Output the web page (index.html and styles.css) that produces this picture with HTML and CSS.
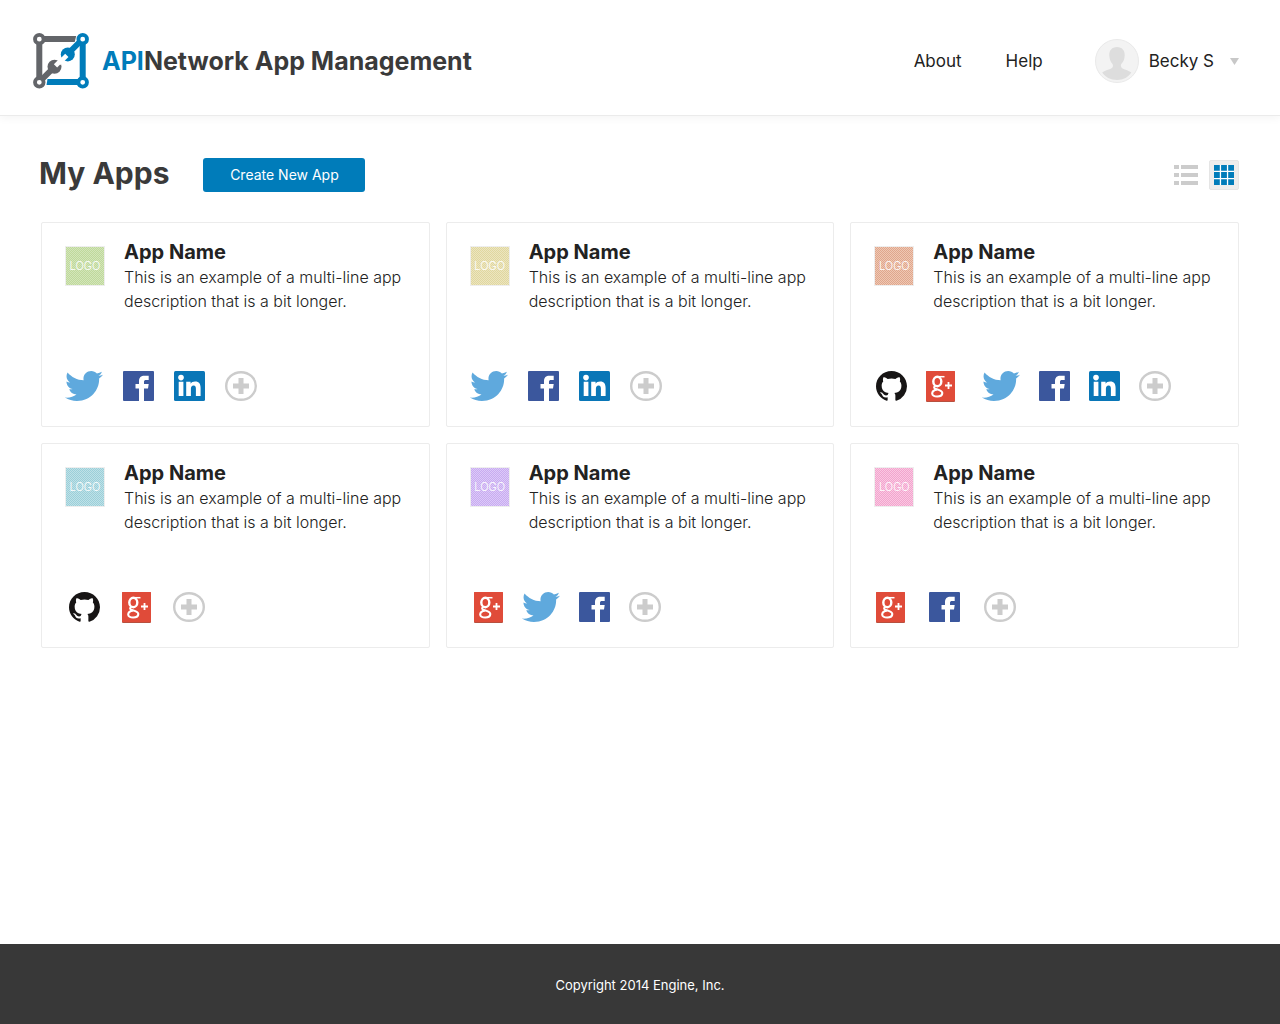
FILE: index.html
```html
<!DOCTYPE html>
<html lang="en">
<head>
<meta charset="utf-8">
<meta name="viewport" content="width=device-width, initial-scale=1">
<title>API Network App Management</title>
<link rel="stylesheet" href="styles.css">
</head>
<body>
<svg class="sprite" aria-hidden="true">
  <symbol id="twitter" viewBox="0 2.2 24 19.6" preserveAspectRatio="none"><path fill="#5fa9dd" d="M23.954 4.569c-.885.389-1.83.654-2.825.775 1.014-.611 1.794-1.574 2.163-2.723-.951.555-2.005.959-3.127 1.184-.896-.959-2.173-1.559-3.591-1.559-2.717 0-4.92 2.203-4.92 4.917 0 .39.045.765.127 1.124C7.691 8.094 4.066 6.13 1.64 3.161c-.427.722-.666 1.561-.666 2.475 0 1.71.87 3.213 2.188 4.096-.807-.026-1.566-.248-2.228-.616v.061c0 2.385 1.693 4.374 3.946 4.827-.413.111-.849.171-1.296.171-.314 0-.615-.03-.916-.086.631 1.953 2.445 3.377 4.604 3.417-1.68 1.319-3.809 2.105-6.102 2.105-.39 0-.779-.023-1.17-.067 2.189 1.394 4.768 2.209 7.557 2.209 9.054 0 13.999-7.496 13.999-13.986 0-.209 0-.42-.015-.63.961-.689 1.8-1.56 2.46-2.548l-.047-.02z"/></symbol>
  <symbol id="facebook" viewBox="0 0 31 30"><rect width="31" height="30" rx="1" fill="#3b579d"/><path fill="#fff" d="M16 30V17.500h-3.500V13H16v-2.800c0-3.700 2-5.500 5.500-5.500h4.200V9h-2.500c-1.600 0-2.200.6-2.200 2v2h4.700l-.7 4.500h-4V30z"/></symbol>
  <symbol id="linkedin" viewBox="0 0 31 30"><rect width="31" height="30" rx="1.500" fill="#0976b7"/><g fill="#fff"><circle cx="7" cy="6.600" r="2.800"/><path d="M4.700 10.800h4.700V25H4.700zM12.200 10.800h4.400v1.900c.8-1.400 2.400-2.300 4.500-2.300 4.200 0 5.500 2.600 5.500 6.600v8h-4.700v-7.200c0-2-.4-3.400-2.300-3.400s-2.700 1.400-2.700 3.400V25h-4.700z"/></g></symbol>
  <symbol id="github" viewBox="0 0 16 15.7" preserveAspectRatio="none"><path fill="#171515" d="M8 0C3.58 0 0 3.580 0 8c0 3.540 2.290 6.530 5.470 7.590.4.070.550-.170.550-.380 0-.190-.010-.820-.010-1.490-2.010.370-2.530-.490-2.690-.940-.090-.230-.480-.940-.820-1.130-.280-.150-.680-.520-.010-.530.630-.010 1.080.580 1.230.820.720 1.210 1.870.870 2.330.660.070-.520.280-.870.510-1.070-1.780-.200-3.640-.890-3.640-3.950 0-.870.310-1.590.820-2.150-.080-.200-.360-1.020.080-2.120 0 0 .670-.210 2.200.820.640-.180 1.320-.270 2-.270s1.360.090 2 .270c1.530-1.040 2.200-.820 2.200-.820.440 1.100.160 1.920.080 2.120.510.560.820 1.270.820 2.150 0 3.070-1.870 3.750-3.650 3.950.290.250.540.730.540 1.480 0 1.070-.010 1.930-.010 2.200 0 .210.150.460.550.380A8.013 8.013 0 0016 8c0-4.420-3.580-8-8-8z"/></symbol>
  <symbol id="googleplus" viewBox="0 0 29 31"><rect width="29" height="31" rx="1" fill="#b8503f"/><rect width="29" height="30" rx="1" fill="#e04b39"/><g fill="none" stroke="#fff"><ellipse cx="11.300" cy="10.500" rx="4" ry="4.700" stroke-width="2.400"/><path d="M12 5.700h6.500" stroke-width="1.500"/><path d="M9.500 14.700c-2 1.300-1.800 2.600.5 3.300 3.200 1 6.300 1.400 6.300 4 0 2.300-2.200 3.500-5.100 3.500-3 0-5-1.200-5-3.100 0-2 2-3.200 4.600-3.600" stroke-width="2.100"/><path d="M19 14.500h7M22.500 11v7" stroke-width="1.800"/></g></symbol>
  <symbol id="plus" viewBox="0 0 32 30"><ellipse cx="16" cy="15" rx="14.800" ry="13.800" fill="none" stroke="#ccc" stroke-width="2.400"/><path fill="#ccc" d="M13.500 7h5v5.500H24v5h-5.500V23h-5v-5.500H8v-5h5.500z"/></symbol>
</svg>

<header class="header">
  <a class="brand" href="#">
    <svg class="brand-mark" viewBox="0 0 56 56" aria-hidden="true">
      <g fill="none" stroke="#636569" stroke-width="6"><path d="M6.300 49V6H40"/><path d="M6.300 49l13-13"/></g>
      <path fill="#636569" d="M39 3h4.200l-1.500 6H39z"/>
      <circle cx="21.500" cy="33.800" r="7" fill="#636569"/>
      <path d="M22.500 32.800l8-8" stroke="#fff" stroke-width="4.600"/>
      <g fill="none" stroke="#007cba" stroke-width="6"><path d="M49.700 6v43H16"/><path d="M49.700 6l-13 13"/></g>
      <path fill="#007cba" d="M17 46h-2.500L13.500 52H17z"/>
      <circle cx="34.800" cy="21.400" r="7" fill="#007cba"/>
      <path d="M33.800 22.400l-8 8" stroke="#fff" stroke-width="4.600"/>
      <g fill="#fff" stroke-width="3.800"><g stroke="#636569"><circle cx="6.300" cy="6.200" r="4.300"/><circle cx="6.300" cy="49.300" r="4.300"/></g><g stroke="#007cba"><circle cx="49.700" cy="6.200" r="4.300"/><circle cx="49.700" cy="49.300" r="4.300"/></g></g>
    </svg>
    <span class="brand-name"><span class="brand-accent">API</span>Network App Management</span>
  </a>
  <nav class="nav">
    <a href="#">About</a>
    <a href="#">Help</a>
    <button class="user" type="button" aria-haspopup="true">
      <svg class="avatar" viewBox="0 0 44 44" aria-hidden="true"><circle cx="22" cy="22" r="21.500" fill="#f3f3f3" stroke="#e9e9e9"/><path fill="#ddd" d="M22 8c5 0 8 3.500 7.700 8.500-.2 3.500-1.300 6.200-3 8-.9 1-1 2.600-.4 3.700 1.300 2.400 7 2.600 10 5.300C33.500 38 28.500 41 22 41S10 38 7.200 33.500c3-2.700 8.900-2.900 10.400-5.300.6-1.100.4-2.700-.5-3.700-1.600-1.800-2.600-4.500-2.800-8C14 11.500 17 8 22 8z"/></svg>
      <span>Becky S</span>
      <svg class="caret" viewBox="0 0 9 7" aria-hidden="true"><path fill="#c8c8c8" d="M0 0h9L4.500 7z"/></svg>
    </button>
  </nav>
</header>

<main class="main">
  <div class="toolbar">
    <h1>My Apps</h1>
    <button class="create" type="button">Create New App</button>
    <div class="views">
      <button class="view" type="button" aria-label="List view"><svg viewBox="0 0 24 20"><path fill="#ccc" d="M0 0h5v4H0zM7 0h17v4H7zM0 8h5v4H0zM7 8h17v4H7zM0 16h5v4H0zM7 16h17v4H7z"/></svg></button>
      <button class="view view-active" type="button" aria-label="Grid view"><svg viewBox="0 0 24 20"><path fill="#fff" d="M2 0h20v20H2z"/><path fill="#007cba" d="M2 0h5.800v5.800H2zM9.100 0h5.800v5.800H9.100zM16.200 0H22v5.800h-5.800zM2 7.100h5.800v5.800H2zM9.100 7.100h5.800v5.800H9.100zM16.200 7.100H22v5.800h-5.800zM2 14.200h5.800V20H2zM9.100 14.200h5.800V20H9.100zM16.200 14.200H22V20h-5.800z"/></svg></button>
    </div>
  </div>

  <section class="grid" aria-label="Apps">
    <article class="card">
      <div class="summary"><div class="logo green">LOGO</div><div class="copy"><h2>App Name</h2><p>This is an example of a multi-line app description that is a bit longer.</p></div></div>
      <div class="links">
        <a href="#" aria-label="Twitter"><svg class="icon bird"><use href="#twitter"/></svg></a>
        <a href="#" aria-label="Facebook"><svg class="icon"><use href="#facebook"/></svg></a>
        <a href="#" aria-label="LinkedIn"><svg class="icon"><use href="#linkedin"/></svg></a>
        <button type="button" aria-label="Add network"><svg class="icon add"><use href="#plus"/></svg></button>
      </div>
    </article>
    <article class="card">
      <div class="summary"><div class="logo yellow">LOGO</div><div class="copy"><h2>App Name</h2><p>This is an example of a multi-line app description that is a bit longer.</p></div></div>
      <div class="links">
        <a href="#" aria-label="Twitter"><svg class="icon bird"><use href="#twitter"/></svg></a>
        <a href="#" aria-label="Facebook"><svg class="icon"><use href="#facebook"/></svg></a>
        <a href="#" aria-label="LinkedIn"><svg class="icon"><use href="#linkedin"/></svg></a>
        <button type="button" aria-label="Add network"><svg class="icon add"><use href="#plus"/></svg></button>
      </div>
    </article>
    <article class="card">
      <div class="summary"><div class="logo orange">LOGO</div><div class="copy"><h2>App Name</h2><p>This is an example of a multi-line app description that is a bit longer.</p></div></div>
      <div class="links indent compact">
        <a href="#" aria-label="GitHub"><svg class="icon"><use href="#github"/></svg></a>
        <a class="group-end" href="#" aria-label="Google Plus"><svg class="icon gplus"><use href="#googleplus"/></svg></a>
        <a href="#" aria-label="Twitter"><svg class="icon bird"><use href="#twitter"/></svg></a>
        <a href="#" aria-label="Facebook"><svg class="icon"><use href="#facebook"/></svg></a>
        <a href="#" aria-label="LinkedIn"><svg class="icon"><use href="#linkedin"/></svg></a>
        <button type="button" aria-label="Add network"><svg class="icon add"><use href="#plus"/></svg></button>
      </div>
    </article>
    <article class="card">
      <div class="summary"><div class="logo teal">LOGO</div><div class="copy"><h2>App Name</h2><p>This is an example of a multi-line app description that is a bit longer.</p></div></div>
      <div class="links inset medium">
        <a href="#" aria-label="GitHub"><svg class="icon"><use href="#github"/></svg></a>
        <a href="#" aria-label="Google Plus"><svg class="icon gplus"><use href="#googleplus"/></svg></a>
        <button type="button" aria-label="Add network"><svg class="icon add"><use href="#plus"/></svg></button>
      </div>
    </article>
    <article class="card">
      <div class="summary"><div class="logo purple">LOGO</div><div class="copy"><h2>App Name</h2><p>This is an example of a multi-line app description that is a bit longer.</p></div></div>
      <div class="links inset compact">
        <a href="#" aria-label="Google Plus"><svg class="icon gplus"><use href="#googleplus"/></svg></a>
        <a href="#" aria-label="Twitter"><svg class="icon bird"><use href="#twitter"/></svg></a>
        <a href="#" aria-label="Facebook"><svg class="icon"><use href="#facebook"/></svg></a>
        <button type="button" aria-label="Add network"><svg class="icon add"><use href="#plus"/></svg></button>
      </div>
    </article>
    <article class="card">
      <div class="summary"><div class="logo pink">LOGO</div><div class="copy"><h2>App Name</h2><p>This is an example of a multi-line app description that is a bit longer.</p></div></div>
      <div class="links indent wide">
        <a href="#" aria-label="Google Plus"><svg class="icon gplus"><use href="#googleplus"/></svg></a>
        <a href="#" aria-label="Facebook"><svg class="icon"><use href="#facebook"/></svg></a>
        <button type="button" aria-label="Add network"><svg class="icon add"><use href="#plus"/></svg></button>
      </div>
    </article>
  </section>
</main>

<footer class="footer">Copyright 2014 Engine, Inc.</footer>
</body>
</html>
```
FILE: styles.css
```css
* { box-sizing: border-box; }

body {
  margin: 0;
  min-height: 100vh;
  display: flex;
  flex-direction: column;
  background: #fff;
  color: #222;
  font-family: Inter, "Liberation Sans", sans-serif;
}

h1, h2, p { margin: 0; }
a { color: inherit; text-decoration: none; }
svg { display: block; }
button {
  margin: 0;
  padding: 0;
  border: 0;
  background: none;
  color: inherit;
  font: inherit;
  cursor: pointer;
}

.sprite { display: none; }

.header {
  display: flex;
  align-items: center;
  justify-content: space-between;
  padding: 33px 41px 26px 33px;
  border-bottom: 1px solid #ebebeb;
  box-shadow: 0 3px 8px rgba(0, 0, 0, 0.04);
}

.brand { display: flex; align-items: center; gap: 13px; }
.brand-mark { width: 56px; height: 56px; }
.brand-name { font-size: 25px; font-weight: 700; line-height: 32px; color: #3a3a3a; }
.brand-accent { color: #007cba; }

.nav { display: flex; align-items: center; gap: 44px; font-size: 17px; line-height: 24px; }
.user { display: flex; align-items: center; gap: 10px; margin-left: 8px; }
.avatar { width: 44px; height: 44px; }
.caret { width: 9px; height: 7px; margin-left: 6px; }

.main { flex: 1; padding: 42px 41px 48px; }

.toolbar { display: flex; align-items: center; margin: 0 0 30px -2px; }
h1 { padding-bottom: 4px; font-size: 30px; font-weight: 700; line-height: 30px; color: #3a3a3a; }
.create {
  width: 162px;
  height: 34px;
  margin-left: 34px;
  padding-bottom: 2px;
  border-radius: 3px;
  background: #007cba;
  color: #fff;
  font-size: 14px;
}
.views { display: flex; gap: 8px; margin-left: auto; }
.view {
  display: flex;
  align-items: center;
  justify-content: center;
  width: 30px;
  height: 30px;
  border: 1px solid transparent;
  border-radius: 2px;
}
.view svg { width: 24px; height: 20px; }
.view-active { border-color: #e5e5e5; background: #ededed; }

.grid {
  display: grid;
  grid-template-columns: repeat(auto-fit, minmax(360px, 1fr));
  gap: 16px;
}
.card {
  display: flex;
  flex-direction: column;
  justify-content: space-between;
  gap: 24px;
  min-height: 205px;
  padding: 17px 16px 24px 23px;
  border: 1px solid #ececec;
  border-radius: 2px;
}
.summary { display: flex; gap: 19px; }
.logo {
  flex: none;
  width: 40px;
  height: 40px;
  margin-top: 6px;
  border: 1px solid #eee;
  background: conic-gradient(var(--tint) 25%, var(--shade) 0 50%, var(--tint) 0 75%, var(--shade) 0) 0 0 / 2px 2px;
  color: #fff;
  font-size: 11px;
  font-weight: 300;
  line-height: 38px;
  text-align: center;
}
.green { --tint: #d3e5ba; --shade: #bfd99b; }
.yellow { --tint: #ece5c0; --shade: #e0d79f; }
.orange { --tint: #efc8b3; --shade: #dfa68d; }
.teal { --tint: #bfe1e7; --shade: #9bcfd9; }
.purple { --tint: #dccaf8; --shade: #c8abf0; }
.pink { --tint: #fac8e2; --shade: #f2a4cd; }

h2 { padding-bottom: 1px; font-size: 20px; font-weight: 700; line-height: 24px; }
.copy p { font-size: 16px; font-weight: 300; line-height: 24px; }

.links { display: flex; align-items: flex-start; gap: 20px; height: 31px; }
.compact { gap: 19px; }
.medium { gap: 22px; }
.wide { gap: 24px; }
.indent { padding-left: 2px; }
.inset { padding-left: 4px; }
.group-end { margin-right: 8px; }
.icon { width: 31px; height: 30px; }
.bird { width: 38px; }
.gplus { width: 29px; height: 31px; }
.add { width: 32px; }

.footer {
  padding: 29px 24px 27px;
  background: #383838;
  color: #fff;
  font-size: 13px;
  line-height: 24px;
  text-align: center;
}
```
